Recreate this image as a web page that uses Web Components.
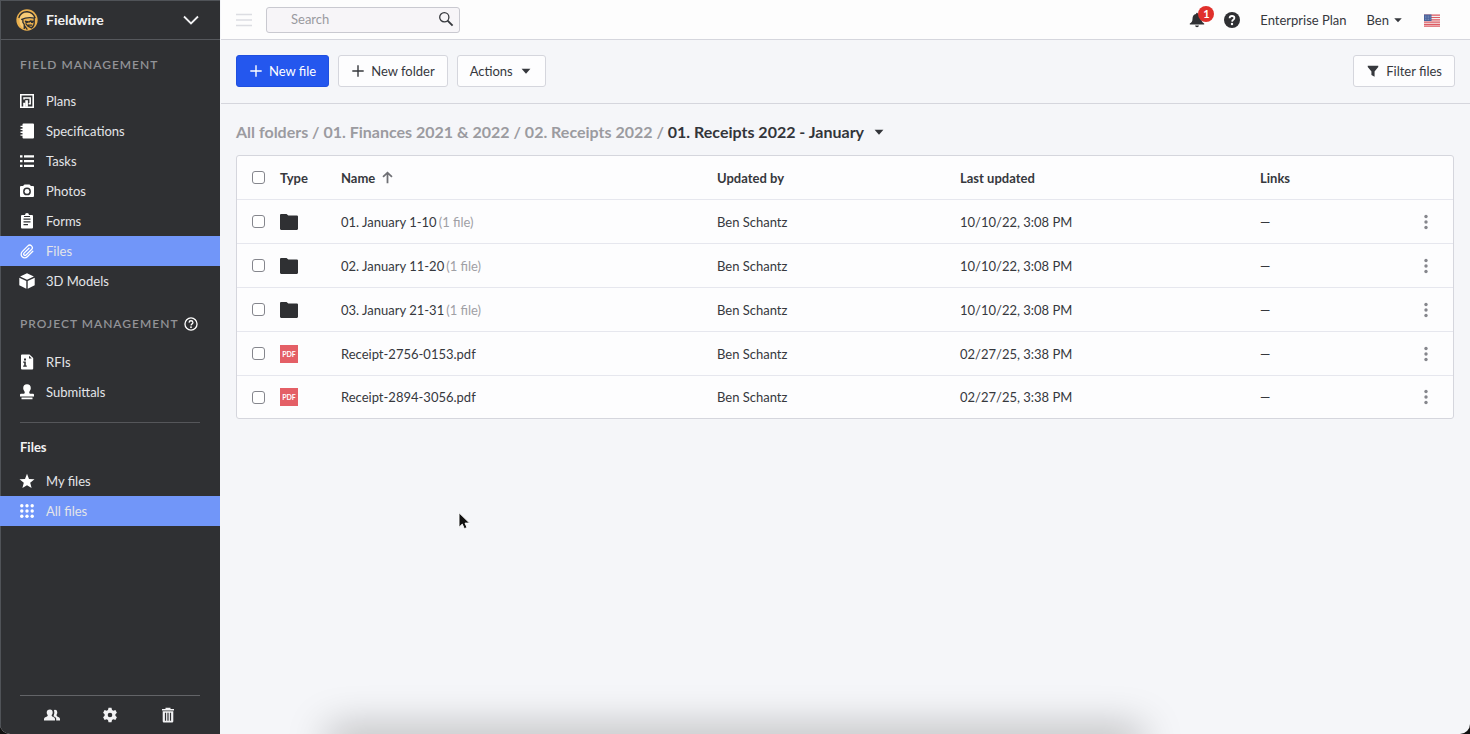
<!DOCTYPE html>
<html lang="en">
<head>
<meta charset="utf-8">
<title>Fieldwire - Files</title>
<style>
  html, body { height: 100%; }
  body {
    margin: 0;
    background: #111;
    color: #36383d;
    font: 13px/20px Lato, "Liberation Sans", sans-serif;
    --ink: #2f3033;
    --line: #d5d6dd;
    --accent: #7196f9;
    --primary: #2457ee;
  }
</style>
</head>
<body>
<fw-app></fw-app>

<script>
const ICONS = {
  menu: '<path d="M0 2.500h16M0 8h16M0 13.500h16" stroke="currentColor" stroke-width="1.300" fill="none"/>',
  chevron: '<path d="M1 4.500l7 7 7-7" fill="none" stroke="currentColor" stroke-width="1.800"/>',
  search: '<circle cx="6.300" cy="6.300" r="4.600" fill="none" stroke="currentColor" stroke-width="1.300"/><path d="M9.600 9.600l5 5" stroke="currentColor" stroke-width="1.800"/>',
  caret: '<path d="M3 5.500h10L8 11z"/>',
  plus: '<path d="M8 1.500v13M1.500 8h13" stroke="currentColor" stroke-width="1.600" fill="none"/>',
  filter: '<path d="M2 2h12v1.500L9.800 8.500V14.500L6.200 12.500V8.500L2 3.500z"/>',
  plans: '<path fill-rule="evenodd" d="M1 1h14v14H1zM2.600 2.600v10.800h1.600V9.800h2.300V13.400H13.400V2.600z"/><path d="M5 6.600V4.900h6.200v5.900H9.600" fill="none" stroke="currentColor" stroke-width="1.500"/><path d="M6.300 7.200h2.600v6.600H6.300z"/>',
  specs: '<path d="M4.500.5H14q1 0 1 1v13q0 1-1 1H4.500q-1 0-1-1V12.800h-2v-1.300h2V9.900h-2V8.600h2V7h-2V5.700h2V4.100h-2V2.800h2V1.500q0-1 1-1z"/>',
  tasks: '<path d="M1 2.200h2.500v2.200H1zM5 2.200h10v2.200H5zM1 7h2.500v2.200H1zM5 7h10v2.200H5zM1 11.800h2.500v2.200H1zM5 11.800h10v2.200H5z"/>',
  camera: '<path fill-rule="evenodd" d="M5.500 1.500h5L12 3h2q1 0 1 1v9q0 1-1 1H2q-1 0-1-1V4q0-1 1-1h2zM8 4.500a3.900 3.900 0 1 0 0 7.800 3.900 3.900 0 1 0 0-7.800z"/><circle cx="8" cy="8.400" r="2.400"/>',
  clipboard: '<path fill-rule="evenodd" d="M3 2h3a2 2 0 0 1 4 0h3q1 0 1 1v11.500q0 1-1 1H3q-1 0-1-1V3q0-1 1-1zM4.500 5.500v1.200h7V5.500zM4.500 8.300v1.200h7V8.300zM4.500 11.100v1.200H9v-1.200zM5 3v1h6V3z"/>',
  clip: '<path d="M13.600 7.200L8.100 12.700a3.600 3.600 0 0 1-5.100-5.100L8.700 1.900a2.500 2.500 0 0 1 3.600 3.600L6.800 11a1.300 1.300 0 0 1-1.900-1.900L9.800 4.300" transform="translate(.2 1)" fill="none" stroke="currentColor" stroke-width="1.300" stroke-linecap="round"/>',
  cube: '<path d="M8 .3l6.900 3.200L8 6.800 1.100 3.500zM.3 4.800l7 3.300v7.600l-7-3.400zM15.700 4.800l-7 3.300v7.600l7-3.400z"/>',
  helpOutline: '<circle cx="8" cy="8" r="6.900" fill="none" stroke="currentColor" stroke-width="1.500"/><path d="M5.800 6.400q.1-2.100 2.200-2.100t2.200 1.900q0 1-1 1.700T8 9.700" fill="none" stroke="currentColor" stroke-width="1.500"/><circle cx="8" cy="11.700" r="1"/>',
  help: '<path fill-rule="evenodd" d="M8 0a8 8 0 1 0 0 16A8 8 0 1 0 8 0z"/><path d="M5.600 6.200q.1-2.200 2.400-2.200t2.400 2q0 1-1.100 1.700T8.100 9.600" fill="none" stroke="#fff" stroke-width="1.800"/><circle cx="8" cy="12" r="1.200" fill="#fff"/>',
  rfi: '<path fill-rule="evenodd" d="M3 .5h7.500L14.200 4v10.500q0 1-1 1H3q-1 0-1-1v-13q0-1 1-1zM10 1.800V4.500h2.800zM5 4.500v2h2v-2zM4.200 7.600v1.200h1v2.700h-1v1.300h3.600v-1.300h-1V7.600z"/>',
  stamp: '<path d="M8 .3q3.800.2 3.800 3.900 0 1.600-1.200 3.100-.9 1.300.2 2.500H14q1 0 1 1v1.600H1v-1.600q0-1 1-1h3.200q1.100-1.200.2-2.500Q4.200 5.800 4.200 4.200 4.200.5 8 .3zM2.500 13.400h11v1.800h-11z"/>',
  star: '<path d="M8 .8l2 5.100 5.500.4-4.300 3.500 1.400 5.300L8 12.200l-4.600 2.900 1.400-5.300L.5 6.300 6 5.900z"/>',
  grid: [2.8, 8, 13.2].map(y => [2.8, 8, 13.2].map(x => `<circle cx="${x}" cy="${y}" r="1.700"/>`).join('')).join(''),
  people: '<path d="M6 2.500q2.700 0 2.700 2.900 0 1.500-1 2.700-.3 1 .6 1.400 2.700.8 2.700 2.300v1.700H0v-1.700q0-1.500 3-2.300 1-.4.700-1.400-1-1.200-1-2.700Q2.700 2.500 6 2.500zM10 3q3-.7 3.300 2.200 0 1.700-.8 2.900 0 1 .8 1.400 2.700.8 2.700 2.300v1.700h-3.800v-2q-.2-1.200-2.700-2.300 1.500-2.700.5-6.200z"/>',
  gear: '<path fill-rule="evenodd" d="M6.500.8h3l.5 2.100 1.400.8 2-.6 1.500 2.600-1.500 1.500v1.600l1.500 1.500-1.500 2.600-2-.6-1.400.8-.5 2.100h-3L6 13.100l-1.400-.8-2 .6-1.500-2.600 1.500-1.500V7.200L1.100 5.700l1.500-2.600 2 .6L6 2.900zM8 5.700a2.300 2.300 0 1 0 0 4.600 2.300 2.300 0 1 0 0-4.600z"/>',
  trash: '<path fill-rule="evenodd" d="M5.500.7h5v1.200H14v1.600H2V1.900h3.500zM2.700 4.300h10.600v9.900q0 1.200-1.200 1.200H3.900q-1.200 0-1.200-1.200zM4.900 5.800v7.900h1.200V5.800zM7.400 5.800v7.900h1.200V5.800zM9.900 5.800v7.900h1.200V5.800z"/>',
  bell: '<path d="M8 .8q.9 0 1 1.100 3.500.8 3.500 4.800 0 3.600 2.700 4.800v1H.8v-1q2.700-1.200 2.700-4.800 0-4 3.500-4.800Q7.100.8 8 .8zM6 13.500h4Q9.700 15.300 8 15.300T6 13.500z"/>',
  folder: '<path d="M1 .8h4.800l1.600 1.400H15q1 0 1 1v10.800q0 1-1 1H1q-1 0-1-1V1.800q0-1 1-1z"/>',
  up: '<path d="M8 15V2M2.500 7.300L8 2l5.500 5.300" fill="none" stroke="currentColor" stroke-width="2.200"/>',
  dots: '<circle cx="8" cy="2.500" r="1.700"/><circle cx="8" cy="8" r="1.700"/><circle cx="8" cy="13.500" r="1.700"/>',
  flag: '<path fill="#f4f1f1" d="M0 2.500h16v12H0z"/><path d="M0 3.200h16M0 5.500h16M0 7.800h16M0 10.100h16M0 12.400h16M0 14.200h16" stroke="#dd5a62" stroke-width="1.200"/><path fill="#49639c" d="M0 2.500h7.500v6.500H0z"/><path d="M1 4.200h6M1 5.800h6M1 7.400h6" stroke="#a9b8d8" stroke-width=".6" stroke-dasharray=".8 .8"/>',
  avatar: '<circle cx="16" cy="16" r="15.500" fill="#eab04e"/><path d="M5 17Q5 7 14 5.500q9-1 12 6l.5 2-16 1.500-.5 4 2 7-1 2Q5 25 5 17z" fill="#f6cb78"/><path d="M4 13Q7 3.500 16.500 4 25 4.700 28 13.500M7.500 15.500q9-4.500 20-2.200M10 15.500v4l2 3v6.500M13 17.500l6 1.500 2-1.500 6 1M26.500 14v6q0 5-4 7.500l-5-2.500-3.500-4M17.500 23.500h6M12 24l4.500 6" fill="none" stroke="#2f3033" stroke-width="1.900"/><path d="M13 17.500h5l-1 2.800h-3zM21 17.700h5l-1 2.600h-3z" fill="#2f3033"/>',
  cursor: '<path d="M1 .8v14.400l3.300-3.100 2 4.600 2.700-1.100-2-4.500h4.600z" fill="#111" stroke="#fff" stroke-width=".9"/>'
};
const BOXES = { avatar: '0 0 32 32', cursor: '0 0 13 18' };

function define(name, css, render) {
  customElements.define(name, class extends HTMLElement {
    connectedCallback() {
      if (this.shadowRoot) return;
      const root = this.attachShadow({ mode: 'open' });
      root.innerHTML = `<style>*{box-sizing:border-box}${css}</style>${render(this)}`;
    }
  });
}

define('fw-icon', `
  :host { display: inline-flex; flex: none; width: 16px; height: 16px; }
  svg { width: 100%; height: 100%; fill: currentColor; display: block; }
`, el => `<svg viewBox="${BOXES[el.getAttribute('name')] || '0 0 16 16'}" aria-hidden="true">${ICONS[el.getAttribute('name')]}</svg>`);

define('fw-nav-item', `
  :host { display: block; }
  a { display: flex; align-items: center; gap: 11px; height: 30px; padding: 0 19px; color: #e4e5e8; text-decoration: none; }
  a.active { background: var(--accent); }
  fw-icon { color: #fff; }
`, el => `<a href="#" class="${el.hasAttribute('active') ? 'active' : ''}"><fw-icon name="${el.getAttribute('icon')}"></fw-icon><slot></slot></a>`);

define('fw-nav-heading', `
  :host { display: flex; align-items: center; gap: 5px; padding: 0 20px; font-size: 12px; font-weight: 600; letter-spacing: 1px; color: #929397; white-space: nowrap; }
`, () => '<slot></slot>');

define('fw-sidebar', `
  :host { display: flex; flex-direction: column; width: 220px; flex: none; background: var(--ink); color: #f2f2f4; border-left: 1px solid #505358; margin-right: 1px; }
  header { height: 40px; border-bottom: 1px solid #56585d; border-top: 1px solid #505358; }
  .project { all: unset; box-sizing: border-box; width: 100%; height: 38px; display: flex; align-items: center; gap: 8px; padding: 0 21px 0 15px; font-size: 14px; font-weight: 700; cursor: pointer; }
  .project span { flex: 1; }
  .project .logo { width: 22px; height: 22px; }
  nav { margin-left: -1px; }
  .field { height: 46px; padding-top: 4px; }
  .pm { height: 51px; padding-top: 4px; }
  .help { color: #fff; width: 14px; height: 14px; }
  .sub { margin: 15px 20px 0; border-top: 1px solid #55565a; padding-top: 14px; }
  h2 { margin: 0 0 9px; font-size: 13px; line-height: 20px; }
  footer { margin: auto 20px 0 19px; border-top: 1px solid #636468; height: 39px; display: flex; align-items: center; padding: 0 24px; justify-content: space-between; }
  footer button { all: unset; display: flex; cursor: pointer; }
`, () => `
  <header><button class="project"><fw-icon class="logo" name="avatar"></fw-icon><span>Fieldwire</span><fw-icon name="chevron"></fw-icon></button></header>
  <nav aria-label="Project">
    <fw-nav-heading class="field">FIELD MANAGEMENT</fw-nav-heading>
    <fw-nav-item icon="plans">Plans</fw-nav-item>
    <fw-nav-item icon="specs">Specifications</fw-nav-item>
    <fw-nav-item icon="tasks">Tasks</fw-nav-item>
    <fw-nav-item icon="camera">Photos</fw-nav-item>
    <fw-nav-item icon="clipboard">Forms</fw-nav-item>
    <fw-nav-item icon="clip" active>Files</fw-nav-item>
    <fw-nav-item icon="cube">3D Models</fw-nav-item>
    <fw-nav-heading class="pm">PROJECT MANAGEMENT<fw-icon class="help" name="helpOutline"></fw-icon></fw-nav-heading>
    <fw-nav-item icon="rfi">RFIs</fw-nav-item>
    <fw-nav-item icon="stamp">Submittals</fw-nav-item>
    <div class="sub"><h2>Files</h2></div>
    <fw-nav-item icon="star">My files</fw-nav-item>
    <fw-nav-item icon="grid" active>All files</fw-nav-item>
  </nav>
  <footer>
    <button aria-label="People"><fw-icon name="people"></fw-icon></button>
    <button aria-label="Settings"><fw-icon name="gear"></fw-icon></button>
    <button aria-label="Trash"><fw-icon name="trash"></fw-icon></button>
  </footer>`);

define('fw-topbar', `
  :host { display: flex; align-items: center; height: 40px; padding: 0 30px 0 15px; background: #fdfdfd; border-bottom: 1px solid var(--line); }
  button { all: unset; display: flex; align-items: center; cursor: pointer; }
  .menu { color: #dcdde2; margin-right: 14px; }
  form { display: flex; align-items: center; width: 194px; height: 26px; border: 1px solid #c9c9d0; border-radius: 3px; background: #f7f5f8; padding: 0 5px 2px 24px; }
  input { all: unset; flex: 1; min-width: 0; font-size: 13px; line-height: 20px; }
  input::placeholder { color: #9a9a9f; opacity: 1; }
  .right { margin-left: auto; display: flex; align-items: center; }
  .bell { position: relative; margin-right: 19px; color: var(--ink); }
  .badge { position: absolute; left: 9px; top: -6px; width: 16px; height: 16px; border-radius: 8px; background: #e0302b; color: #fff; font-size: 11px; line-height: 16px; font-weight: 700; text-align: center; }
  .help { color: var(--ink); margin-right: 20px; }
  a { color: inherit; text-decoration: none; margin-right: 20px; }
  .user { margin-right: 20px; gap: 3px; }
  .user fw-icon { width: 12px; height: 12px; }
`, () => `
  <button class="menu" aria-label="Menu"><fw-icon name="menu"></fw-icon></button>
  <form role="search"><input type="text" placeholder="Search" aria-label="Search"><button type="button" aria-label="Run search"><fw-icon name="search"></fw-icon></button></form>
  <div class="right">
    <button class="bell" aria-label="Notifications"><fw-icon name="bell"></fw-icon><span class="badge">1</span></button>
    <button class="help" aria-label="Help"><fw-icon name="help"></fw-icon></button>
    <a href="#">Enterprise Plan</a>
    <button class="user">Ben<fw-icon name="caret"></fw-icon></button>
    <button aria-label="Language"><fw-icon name="flag"></fw-icon></button>
  </div>`);

define('fw-button', `
  :host { display: block; }
  button { display: flex; align-items: center; gap: 6px; height: 32px; margin: 0; padding: 0 12px; border: 1px solid var(--line); border-radius: 3px; background: #fdfdfe; color: inherit; font: inherit; cursor: pointer; white-space: nowrap; }
  :host([primary]) button { background: var(--primary); border-color: #1f4fe0; color: #fff; }
  ::slotted(fw-icon) { width: 14px; height: 14px; }
`, () => '<button type="button"><slot></slot></button>');

define('fw-toolbar', `
  :host { display: flex; align-items: center; gap: 9px; height: 64px; padding: 0 15px 2px; border-bottom: 1px solid var(--line); }
  .filter { margin-left: auto; }
`, () => `
  <fw-button primary><fw-icon name="plus"></fw-icon>New file</fw-button>
  <fw-button><fw-icon name="plus"></fw-icon>New folder</fw-button>
  <fw-button>Actions<fw-icon name="caret"></fw-icon></fw-button>
  <fw-button class="filter"><fw-icon name="filter"></fw-icon>Filter files</fw-button>`);

define('fw-breadcrumb', `
  :host { display: flex; align-items: center; height: 51px; padding: 4px 15px 0; font-size: 16px; font-weight: 700; color: #9b9ba0; white-space: pre; }
  a { color: inherit; text-decoration: none; }
  a.current { color: #33353a; }
  button { all: unset; display: flex; margin-left: 8px; color: #33353a; cursor: pointer; }
  fw-icon { width: 14px; height: 14px; }
`, () => `<a href="#">All folders</a> / <a href="#">01. Finances 2021 &amp; 2022</a> / <a href="#">02. Receipts 2022</a> / <a href="#" class="current">01. Receipts 2022 - January</a><button aria-label="Folder options"><fw-icon name="caret"></fw-icon></button>`);

const FILES = [
  ['folder', '01. January 1-10', '(1 file)', '10/10/22, 3:08 PM'],
  ['folder', '02. January 11-20', '(1 file)', '10/10/22, 3:08 PM'],
  ['folder', '03. January 21-31', '(1 file)', '10/10/22, 3:08 PM'],
  ['pdf', 'Receipt-2756-0153.pdf', '', '02/27/25, 3:38 PM'],
  ['pdf', 'Receipt-2894-3056.pdf', '', '02/27/25, 3:38 PM']
];

define('fw-file-table', `
  :host { display: block; margin: 0 16px 0 15px; border: 1px solid var(--line); border-radius: 3px; background: #fdfdfe; }
  table { width: 100%; table-layout: fixed; border-collapse: separate; border-spacing: 0; }
  th, td { height: 44px; padding: 0; text-align: left; vertical-align: middle; white-space: nowrap; border-bottom: 1px solid #e6e7ee; }
  tbody tr:last-child td { border-bottom: 0; height: 42px; }
  .check { width: 43px; padding-left: 15px; }
  .type { width: 61px; } .by { width: 243px; } .date { width: 300px; } .links { width: 139px; } .more { width: 54px; }
  input { appearance: none; display: block; width: 13px; height: 13px; margin: 0; border: 1px solid #85868d; border-radius: 3px; background: #fff; }
  .folder { display: flex; width: 18px; height: 18px; color: var(--ink); }
  .pdf { display: block; width: 18px; height: 18px; background: #e45f66; color: #fff; font-size: 7px; line-height: 18px; font-weight: 700; text-align: center; }
  .sort { display: flex; align-items: center; gap: 6px; }
  .sort fw-icon { width: 13px; height: 13px; color: #6f7075; }
  small { font-size: 13px; color: #a0a0a5; margin-left: 2px; }
  button { all: unset; display: flex; color: #85868c; margin-left: 19px; cursor: pointer; }
`, () => `<table>
  <thead><tr>
    <th class="check"><input type="checkbox" aria-label="Select all"></th><th class="type">Type</th>
    <th><span class="sort">Name<fw-icon name="up"></fw-icon></span></th>
    <th class="by">Updated by</th><th class="date">Last updated</th><th class="links">Links</th><th class="more"></th>
  </tr></thead>
  <tbody>${FILES.map(([kind, name, count, date]) => `<tr>
    <td class="check"><input type="checkbox" aria-label="Select ${name}"></td>
    <td>${kind === 'pdf' ? '<span class="pdf">PDF</span>' : '<fw-icon class="folder" name="folder"></fw-icon>'}</td>
    <td>${name}${count ? `<small>${count}</small>` : ''}</td>
    <td>Ben Schantz</td><td>${date}</td><td>—</td>
    <td><button aria-label="More actions"><fw-icon name="dots"></fw-icon></button></td>
  </tr>`).join('')}</tbody></table>`);

define('fw-app', `
  :host { display: flex; position: relative; min-height: 100vh; overflow: hidden; border-radius: 0 0 10px 10px; background: #f5f6f9; }
  main { flex: 1; min-width: 0; }
  .glow { position: absolute; left: 23%; right: 23%; bottom: -14px; height: 10px; box-shadow: 0 0 40px 10px rgba(0,0,0,.28); }
  .cursor { position: absolute; left: 458px; top: 512px; width: 13px; height: 18px; }
`, () => `
  <fw-sidebar></fw-sidebar>
  <main>
    <fw-topbar></fw-topbar>
    <fw-toolbar></fw-toolbar>
    <fw-breadcrumb></fw-breadcrumb>
    <fw-file-table></fw-file-table>
  </main>
  <div class="glow"></div>
  <fw-icon class="cursor" name="cursor"></fw-icon>`);
</script>
</body>
</html>
